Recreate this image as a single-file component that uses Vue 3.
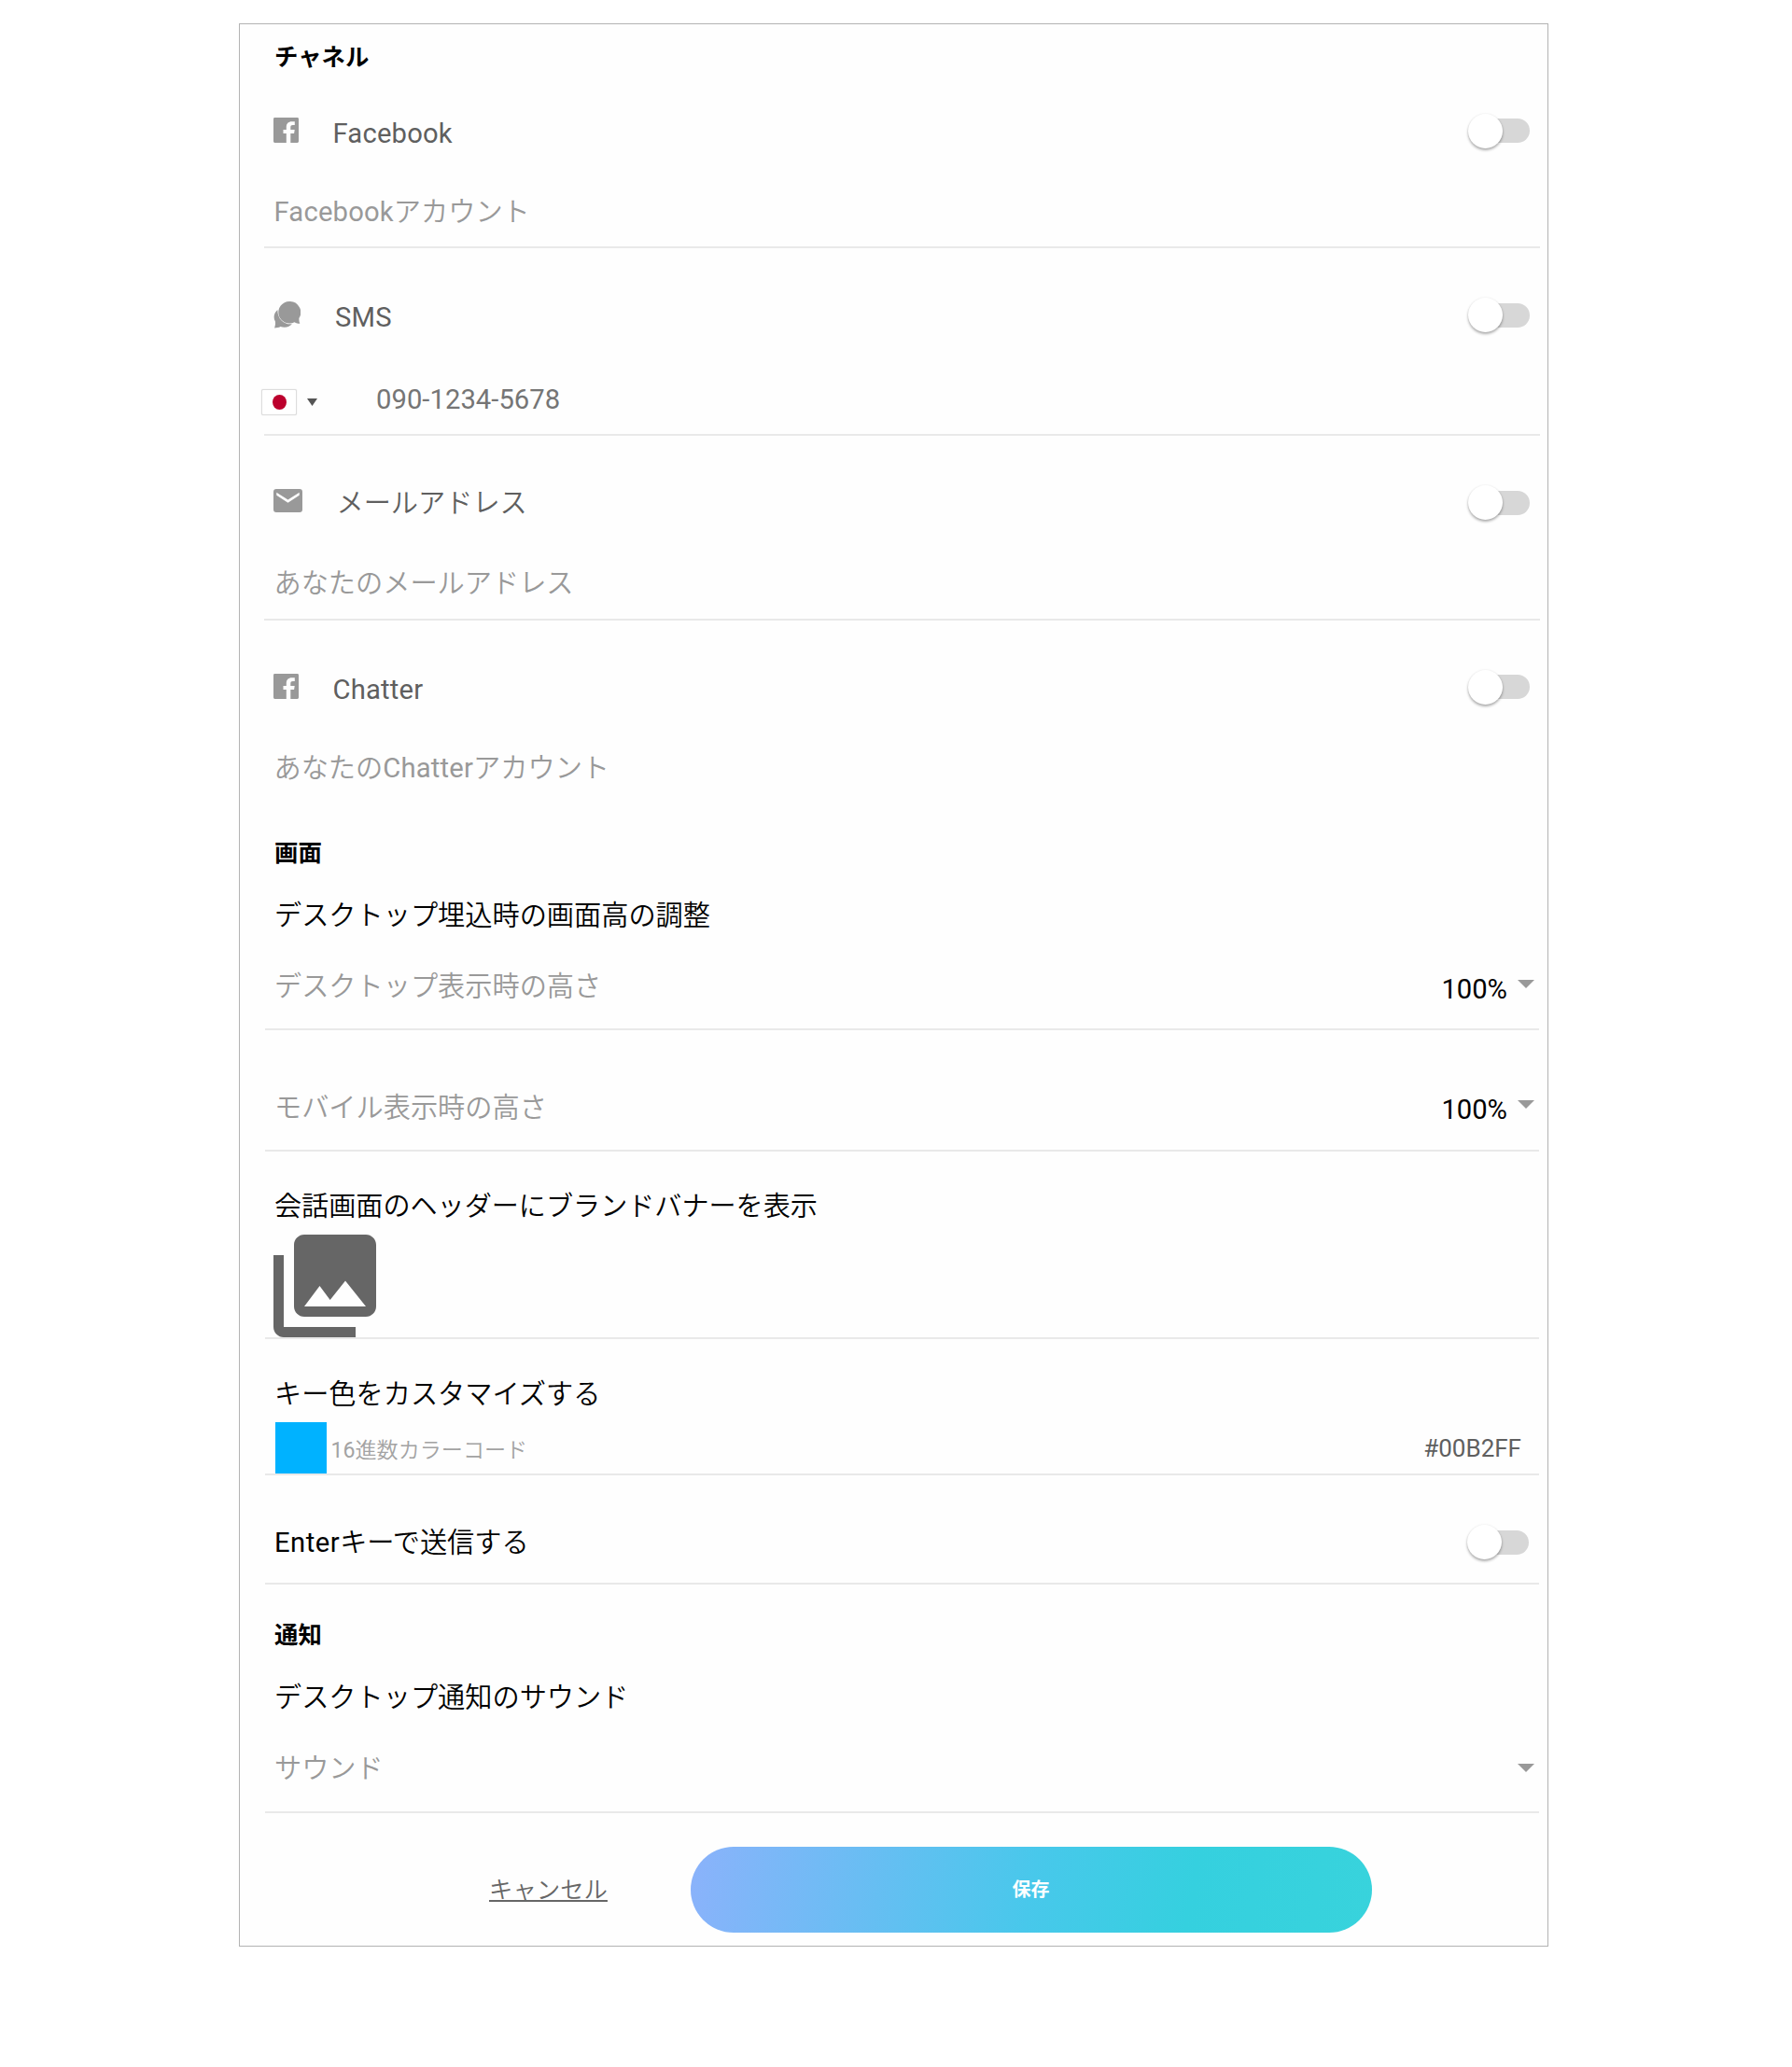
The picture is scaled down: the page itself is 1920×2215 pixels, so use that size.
<script setup>
import { ref } from 'vue'

const phone = ref('090-1234-5678')
const color = ref('#00B2FF')
</script>

<template>
  <main class="card">
    <h2 class="heading heading-first">チャネル</h2>

    <section>
      <div class="channel channel-facebook">
        <svg class="icon" width="27" height="27" viewBox="0 0 27 27"><path fill="#999" d="M1.4 0h24.2A1.4 1.4 0 0 1 27 1.4v24.2a1.4 1.4 0 0 1-1.4 1.4H18.300V17h3.800l.6-4h-4.400v-2.500c0-1.800.8-2.500 2.500-2.500h2V4.200h-3c-4 0-6 2.300-6 5.600V13h-3.300v4h3.300v10H1.400A1.400 1.400 0 0 1 0 25.600V1.400A1.400 1.400 0 0 1 1.400 0z"/></svg>
        <span class="name latin">Facebook</span>
        <span class="toggle"><i></i></span>
      </div>
      <div class="field field-facebook"><span class="latin">Facebook</span>アカウント</div>
    </section>

    <section>
      <div class="channel channel-sms">
        <svg class="icon" width="29" height="29" viewBox="0 0 29 29"><path fill="#999" d="M4.400 9C.7 12.200-.6 16.800 1.900 21.500c.4 2.800-.2 5-.8 7 2.600-.1 4.500-.5 6.400-1.500 5.500 1.700 10-.2 12.400-2.800C11.500 25.200 4.200 18.800 4.400 9z"/><path fill="#999" d="M17 0a11.800 11.800 0 1 0 5.500 22.300c1.900 1 3.700 1.500 5.800 1.500-.8-1.900-1-3.700-.9-5.700A11.800 11.800 0 0 0 17 0z"/></svg>
        <span class="name name-sms latin">SMS</span>
        <span class="toggle"><i></i></span>
      </div>
      <div class="field field-phone">
        <span class="flag"><i></i></span>
        <svg class="flag-arrow" width="11" height="8" viewBox="0 0 11 8"><path fill="#555" d="M0 0h11L5.500 8z"/></svg>
        <span class="phone">{{ phone }}</span>
      </div>
    </section>

    <section>
      <div class="channel channel-mail">
        <svg class="icon" width="31" height="25" viewBox="0 0 31 25"><path fill="#999" fill-rule="evenodd" d="M3 0h25a3 3 0 0 1 3 3v19a3 3 0 0 1-3 3H3a3 3 0 0 1-3-3V3a3 3 0 0 1 3-3zM3.300 3.700v3L15.500 14.700l12.200-8v-3L15.500 11.600z"/></svg>
        <span class="name name-mail">メールアドレス</span>
        <span class="toggle"><i></i></span>
      </div>
      <div class="field field-mail">あなたのメールアドレス</div>
    </section>

    <section>
      <div class="channel channel-chatter">
        <svg class="icon" width="27" height="27" viewBox="0 0 27 27"><path fill="#999" d="M1.4 0h24.2A1.4 1.4 0 0 1 27 1.4v24.2a1.4 1.4 0 0 1-1.4 1.4H18.300V17h3.800l.6-4h-4.400v-2.500c0-1.800.8-2.500 2.500-2.500h2V4.200h-3c-4 0-6 2.300-6 5.600V13h-3.300v4h3.300v10H1.400A1.400 1.400 0 0 1 0 25.600V1.400A1.400 1.400 0 0 1 1.400 0z"/></svg>
        <span class="name latin">Chatter</span>
        <span class="toggle"><i></i></span>
      </div>
      <div class="field field-chatter">あなたの<span class="latin">Chatter</span>アカウント</div>
    </section>

    <section>
      <h2 class="heading heading-screen">画面</h2>
      <h3 class="title title-height">デスクトップ埋込時の画面高の調整</h3>
      <div class="setting select-desktop">
        <span class="label">デスクトップ表示時の高さ</span>
        <span class="value">100%</span>
        <svg class="arrow" width="18" height="9" viewBox="0 0 18 9"><path fill="#999" d="M0 0h18L9 9z"/></svg>
      </div>
      <div class="setting select-mobile">
        <span class="label">モバイル表示時の高さ</span>
        <span class="value">100%</span>
        <svg class="arrow" width="18" height="9" viewBox="0 0 18 9"><path fill="#999" d="M0 0h18L9 9z"/></svg>
      </div>
      <h3 class="title title-banner">会話画面のヘッダーにブランドバナーを表示</h3>
      <div class="setting banner">
        <svg width="110" height="110" viewBox="2 2 20 20"><path fill="#666" d="M22 16V4c0-1.100-.9-2-2-2H8c-1.100 0-2 .9-2 2v12c0 1.100.9 2 2 2h12c1.100 0 2-.9 2-2zm-11-4l2.030 2.710L16 11l4 5H8l3-4zM2 6v14c0 1.100.9 2 2 2h14v-2H4V6H2z"/></svg>
      </div>
      <h3 class="title title-color">キー色をカスタマイズする</h3>
      <div class="setting color">
        <span class="swatch"></span>
        <span class="color-label"><span class="digits">16</span>進数カラーコード</span>
        <span class="color-code">{{ color }}</span>
      </div>
      <div class="setting enter">
        <span><span class="enter-key">Enter</span>キーで送信する</span>
        <span class="toggle"><i></i></span>
      </div>
    </section>

    <section>
      <h2 class="heading heading-notice">通知</h2>
      <h3 class="title title-sound">デスクトップ通知のサウンド</h3>
      <div class="setting select-sound">
        <span class="label">サウンド</span>
        <svg class="arrow" width="18" height="9" viewBox="0 0 18 9"><path fill="#999" d="M0 0h18L9 9z"/></svg>
      </div>
    </section>

    <footer class="actions">
      <a class="cancel">キャンセル</a>
      <button class="save" type="button">保存</button>
    </footer>
  </main>
</template>

<style>
body {
  background: #fff;
}
</style>

<style scoped>
.card {
  box-sizing: border-box;
  width: 1403px;
  height: 2061px;
  margin: 25px 0 0 256px;
  border: 1px solid #b3b3b3;
  background: #fefefe;
  color: #000;
  font: 350 29.200px/30px Roboto, "Noto Sans CJK JP", sans-serif;
  white-space: nowrap;
}
.card * {
  box-sizing: border-box;
}
.latin {
  font-weight: 400;
  letter-spacing: .2px;
}
.heading {
  margin: 0 0 0 37px;
  height: 65px;
  font-size: 25.400px;
  font-weight: 700;
  line-height: 65px;
}
.heading-first { height: 72px; line-height: 70px; }
.heading-screen { margin-top: 44px; }
.heading-notice { margin-top: 22px; }
.title {
  margin: 0 0 0 37px;
  font-size: 29.200px;
  font-weight: 350;
}
.title-height { height: 67px; line-height: 68px; }
.title-banner { margin-top: 30px; height: 58px; font-size: 29.100px; line-height: 58px; }
.title-color { margin-top: 35px; height: 47px; line-height: 49px; }
.title-sound { height: 68px; line-height: 68px; }

.channel {
  display: flex;
  align-items: center;
  height: 143px;
  padding: 0 19px 0 36px;
}
.channel-facebook { height: 84px; }
.channel-chatter { height: 142px; }
.icon { flex: none; }
.channel-facebook .icon, .channel-chatter .icon { margin-bottom: 1px; }
.name {
  padding: 5px 0 0 36.500px;
  color: #5f5f5f;
}
.name-sms { padding-left: 37px; }
.name-mail { padding: 1px 0 0 36.500px; }
.channel-mail .icon { margin-bottom: 4px; }

.toggle {
  display: flex;
  align-items: center;
  flex: none;
  width: 62px;
  height: 26px;
  margin-left: auto;
  border-radius: 13px;
  background: #d7d7d7;
}
.toggle i {
  flex: none;
  width: 37px;
  height: 37px;
  margin-left: -4px;
  border-radius: 50%;
  background: #fff;
  box-shadow: 0 2px 3px rgba(0, 0, 0, .32), 0 0 3px rgba(0, 0, 0, .06);
}

.field {
  display: flex;
  align-items: center;
  margin: 0 8.500px 0 25.500px;
  padding-left: 11px;
  border-bottom: 2px solid #e9e9e9;
  color: #999;
}
.field-facebook { height: 84px; padding-top: 7px; }
.field-phone { height: 58px; padding: 0 0 18px; }
.field-mail { height: 55px; padding-bottom: 24px; }
.field-chatter { height: 31px; border: 0; }
.flag {
  display: flex;
  align-items: center;
  justify-content: center;
  width: 38px;
  height: 28px;
  margin: 6px 0 0 -2.500px;
  border: 1px solid #ddd;
  border-radius: 2px;
  background: #fff;
  box-shadow: 0 0 1px #ccc;
}
.flag i {
  width: 15px;
  height: 16px;
  border-radius: 50%;
  background: #bc002d;
}
.flag-arrow { margin: 6px 0 0 10.500px; }
.phone { margin-left: 63.500px; color: #757575; font-weight: 400; letter-spacing: .05px; }

.setting {
  display: flex;
  align-items: center;
  margin: 0 9px 0 27px;
  padding-left: 10px;
  border-bottom: 2px solid #e9e9e9;
}
.label { margin-right: auto; color: #999; }
.value { margin: 4px 10.500px 0 0; font-weight: 400; }
.arrow { flex: none; margin: 0 5.500px 8px 0; }
.select-desktop { height: 90px; }
.select-desktop .label { margin-bottom: 2px; }
.select-mobile { height: 130px; padding-top: 38px; }
.select-sound { height: 90px; }
.select-sound .label { margin-bottom: 4px; }
.select-sound .arrow { margin-bottom: 5px; }
.banner { height: 113px; padding-left: 9px; }
.banner svg { margin-top: 1px; }
.color { height: 64px; align-items: flex-end; padding-left: 10.500px; }
.swatch { width: 55px; height: 55px; background: #00b2ff; }
.color-label {
  margin: 0 0 9px 5px;
  color: #a3a3a3;
  font-size: 23.100px;
}
.digits { font-weight: 400; }
.color-code {
  margin: 0 19px 12px auto;
  color: #5f5f5f;
  font-size: 26px;
  font-weight: 400;
}
.enter { height: 117px; padding: 28px 11px 0 10px; }
.enter-key { font-weight: 400; letter-spacing: .5px; }

.actions {
  display: flex;
  align-items: center;
  padding: 36px 0 0 267px;
}
.cancel {
  width: 127px;
  color: #666;
  font-size: 25.400px;
  text-decoration: underline;
  text-decoration-thickness: 2px;
  text-underline-offset: 2px;
  text-decoration-skip-ink: none;
}
.save {
  width: 730px;
  height: 92px;
  margin-left: 89px;
  padding: 0 1px 0 0;
  border: 0;
  border-radius: 46px;
  background: linear-gradient(100deg, #8bb2fb 0%, #48c8eb 50%, #35d0df 73%, #38d3dc 100%);
  color: #fff;
  font: 700 20px/92px Roboto, "Noto Sans CJK JP", sans-serif;
}
</style>
